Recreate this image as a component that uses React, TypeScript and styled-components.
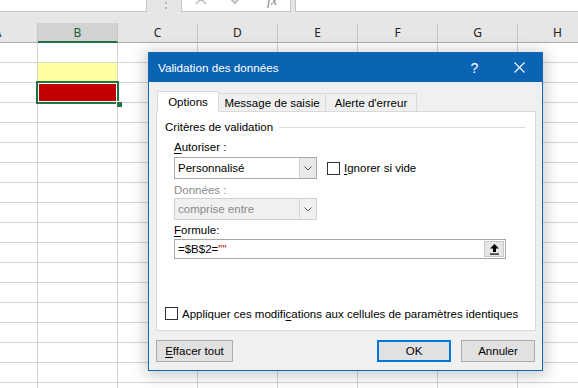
import React from "react";
import styled, { createGlobalStyle, css } from "styled-components";

const GlobalStyle = createGlobalStyle`
  html, body { margin: 0; padding: 0; overflow: hidden; background: #fff; }
  body { font-family: "Liberation Sans", Arial, sans-serif; font-size: 11.5px; color: #000; }
`;

const Screen = styled.div`
  position: relative;
  width: 578px;
  height: 388px;
  overflow: hidden;
  background: #fff;
`;

/* ---------- formula bar strip ---------- */
const TopBar = styled.div`
  height: 23px;
  background: #e6e6e6;
  display: flex;
  align-items: flex-start;
`;
const NameBox = styled.div`
  width: 147px;
  height: 12px;
  background: #fff;
  border-right: 1px solid #c6c6c6;
  border-bottom: 1px solid #c6c6c6;
  box-sizing: border-box;
  flex-shrink: 0;
`;
const Grip = styled.div`
  width: 34px;
  height: 12px;
  display: flex;
  justify-content: center;
  overflow: hidden;
  color: #9a9a9a;
  font-size: 12px;
  line-height: 6px;
  padding-left: 4px;
  box-sizing: border-box;
  flex-shrink: 0;
`;
const FxBox = styled.div`
  width: 110px;
  height: 12px;
  background: #fff;
  border: 1px solid #c6c6c6;
  border-top: none;
  box-sizing: border-box;
  display: flex;
  align-items: flex-start;
  overflow: hidden;
  flex-shrink: 0;
`;
const FxIcon = styled.div<{ $left: number }>`
  margin-left: ${(p) => p.$left}px;
  margin-top: -7px;
  display: flex;
`;
const FxText = styled.span`
  font-family: "Liberation Serif", serif;
  font-style: italic;
  font-size: 14px;
  line-height: 14px;
  color: #888;
  margin-top: -6px;
  margin-left: 24px;
`;
const FormulaBox = styled.div`
  flex: 1;
  margin-left: 4px;
  height: 12px;
  background: #fff;
  border: 1px solid #c6c6c6;
  border-top: none;
  border-right: none;
  box-sizing: border-box;
`;

/* ---------- sheet ---------- */
const Grid = styled.div`
  display: grid;
  grid-template-columns: repeat(8, 80px);
  margin-left: -42px;
`;
const ColHeader = styled.div<{ $selected?: boolean }>`
  height: 20px;
  box-sizing: border-box;
  background: ${(p) => (p.$selected ? "#d2d2d2" : "#e6e6e6")};
  border-right: 1px solid #c6c6c6;
  border-bottom: ${(p) => (p.$selected ? "2px solid #217346" : "1px solid #ababab")};
  display: flex;
  align-items: center;
  justify-content: center;
  font-family: "Noto Sans", sans-serif;
  font-size: 12px;
  padding-top: ${(p) => (p.$selected ? "1px" : "0")};
  color: ${(p) => (p.$selected ? "#1d5e3b" : "#222")};
`;
const Cell = styled.div<{ $fill?: string }>`
  position: relative;
  height: 20px;
  box-sizing: border-box;
  border-right: 1px solid #d4d4d4;
  border-bottom: 1px solid #d4d4d4;
  background: ${(p) => p.$fill || "#fff"};
`;
const Selection = styled.div`
  position: absolute;
  left: -2px;
  top: -2px;
  right: -2px;
  bottom: -2px;
  border: 2px solid #217346;
  box-shadow: inset 0 0 0 1px #fff;
  pointer-events: none;
  z-index: 2;
`;
const FillHandle = styled.div`
  position: absolute;
  right: -5px;
  bottom: -5px;
  width: 5px;
  height: 5px;
  background: #217346;
  border: 1px solid #fff;
  border-right: none;
  border-bottom: none;
`;

/* ---------- dialog ---------- */
const Dialog = styled.div`
  position: absolute;
  left: 148px;
  top: 52px;
  width: 395px;
  height: 319px;
  box-sizing: border-box;
  border: 1px solid #1467b8;
  background: #f0f0f0;
  box-shadow: 0 2px 14px 3px rgba(0, 0, 0, 0.2);
  display: flex;
  flex-direction: column;
  z-index: 5;
`;
const TitleBar = styled.div`
  height: 29px;
  background: #0b63b4;
  color: #fff;
  display: flex;
  align-items: center;
  padding-left: 9px;
  font-size: 11.7px;
  flex-shrink: 0;
`;
const Title = styled.span`
  flex: 1;
`;
const TitleButton = styled.div`
  width: 45px;
  display: flex;
  align-items: center;
  justify-content: center;
  font-size: 14px;
`;
const Body = styled.div`
  flex: 1;
  padding: 9px 6px 0 7px;
  display: flex;
  flex-direction: column;
`;
const TabRow = styled.div`
  display: flex;
  align-items: flex-end;
  height: 21px;
  margin-left: 1px;
  margin-bottom: -1px;
  position: relative;
  z-index: 1;
`;
const Tab = styled.div<{ $active?: boolean; $w: number }>`
  width: ${(p) => p.$w}px;
  box-sizing: border-box;
  display: flex;
  align-items: center;
  justify-content: center;
  border: 1px solid #d9d9d9;
  margin-left: -1px;
  ${(p) =>
    p.$active
      ? css`
          height: 21px;
          background: #fff;
          border-bottom-color: #fff;
          z-index: 1;
        `
      : css`
          height: 19px;
          background: #f0f0f0;
        `}
  &:first-child { margin-left: 0; }
`;
const Panel = styled.div`
  height: 220px;
  box-sizing: border-box;
  border: 1px solid #d9d9d9;
  background: #fff;
  display: flex;
  flex-direction: column;
  padding: 7px 10px 8px 8px;
`;
const GroupHeader = styled.div`
  display: flex;
  align-items: center;
  height: 16px;
`;
const GroupLine = styled.div`
  flex: 1;
  height: 1px;
  background: #dcdcdc;
  margin-left: 6px;
`;
const Fields = styled.div`
  display: flex;
  flex-direction: column;
  padding-left: 9px;
  margin-top: 4px;
`;
const Label = styled.div<{ $disabled?: boolean; $mb?: number }>`
  height: 16px;
  line-height: 16px;
  color: ${(p) => (p.$disabled ? "#8a8a8a" : "#000")};
  margin-bottom: ${(p) => p.$mb ?? 0}px;
`;
const Gap = styled.div<{ $h?: number; $w?: number }>`
  height: ${(p) => p.$h ?? 0}px;
  width: ${(p) => p.$w ?? 0}px;
  flex-shrink: 0;
`;
const Row = styled.div`
  display: flex;
  align-items: center;
`;
const Select = styled.div<{ $disabled?: boolean }>`
  width: 143px;
  height: 22px;
  box-sizing: border-box;
  border: 1px solid ${(p) => (p.$disabled ? "#cfcfcf" : "#a8a8a8")};
  background: ${(p) => (p.$disabled ? "#f0f0f0" : "#fff")};
  color: ${(p) => (p.$disabled ? "#8a8a8a" : "#000")};
  display: flex;
  align-items: stretch;
`;
const SelectText = styled.div`
  flex: 1;
  padding-left: 3px;
  display: flex;
  align-items: center;
`;
const SelectArrow = styled.div<{ $disabled?: boolean }>`
  width: 16px;
  border-left: 1px solid ${(p) => (p.$disabled ? "#d6d6d6" : "#cfcfcf")};
  background: ${(p) => (p.$disabled ? "#f0f0f0" : "#e9e9e9")};
  display: flex;
  align-items: center;
  justify-content: center;
`;
const CheckRow = styled.label`
  display: flex;
  align-items: center;
  gap: 4px;
  height: 17px;
  white-space: nowrap;
`;
const Box = styled.span`
  width: 13px;
  height: 13px;
  box-sizing: border-box;
  border: 1px solid #333;
  background: #fff;
  flex-shrink: 0;
`;
const Input = styled.div`
  width: 332px;
  height: 20px;
  box-sizing: border-box;
  border: 1px solid #a8a8a8;
  background: #fff;
  display: flex;
  align-items: stretch;
`;
const InputText = styled.div`
  flex: 1;
  padding-left: 3px;
  display: flex;
  align-items: center;
`;
const Quote = styled.span`
  color: #d00000;
`;
const RefButton = styled.div`
  width: 20px;
  margin: 1px;
  background: #e6e6e6;
  border: 1px solid #c8c8c8;
  box-sizing: border-box;
  display: flex;
  align-items: center;
  justify-content: center;
`;
const Spacer = styled.div`
  flex: 1;
`;
const ButtonRow = styled.div`
  display: flex;
  align-items: center;
  margin-top: 9px;
  margin-right: 1px;
  gap: 10px;
`;
const Button = styled.div<{ $default?: boolean; $w: number }>`
  width: ${(p) => p.$w}px;
  height: 22px;
  box-sizing: border-box;
  border: ${(p) => (p.$default ? "2px solid #0078d7" : "1px solid #adadad")};
  background: #e1e1e1;
  display: flex;
  align-items: center;
  justify-content: center;
`;
const U = styled.span`
  text-decoration: underline;
  text-underline-offset: 2px;
`;

const Chevron = ({ color }: { color: string }) => (
  <svg width="8" height="5" viewBox="0 0 8 5">
    <path d="M0.5 0.5 L4 4 L7.5 0.5" fill="none" stroke={color} strokeWidth="1" />
  </svg>
);

const cols = ["A", "B", "C", "D", "E", "F", "G", "H"];
const ROWS = 18;

export default function App() {
  return (
    <>
      <GlobalStyle />
      <Screen>
        <TopBar>
          <NameBox />
          <Grip>⋮</Grip>
          <FxBox>
            <FxIcon $left={13}>
              <svg width="12" height="12" viewBox="0 0 12 12">
                <path d="M1 1 L11 11 M11 1 L1 11" stroke="#bdbdbd" strokeWidth="1.6" />
              </svg>
            </FxIcon>
            <FxIcon $left={23}>
              <svg width="13" height="12" viewBox="0 0 13 12">
                <path d="M1 6 L5 10 L12 2" fill="none" stroke="#bdbdbd" strokeWidth="2" />
              </svg>
            </FxIcon>
            <FxText>fx</FxText>
          </FxBox>
          <FormulaBox />
        </TopBar>
        <Grid>
          {cols.map((c) => (
            <ColHeader key={c} $selected={c === "B"}>
              {c}
            </ColHeader>
          ))}
          {Array.from({ length: ROWS }).map((_, r) =>
            cols.map((c) => {
              const isB = c === "B";
              const fill = isB && r === 1 ? "#ffff9f" : isB && r === 2 ? "#c00000" : undefined;
              return (
                <Cell key={`${c}${r}`} $fill={fill}>
                  {isB && r === 2 && (
                    <Selection>
                      <FillHandle />
                    </Selection>
                  )}
                </Cell>
              );
            })
          )}
        </Grid>

        <Dialog>
          <TitleBar>
            <Title>Validation des données</Title>
            <TitleButton>?</TitleButton>
            <TitleButton>
              <svg width="11" height="11" viewBox="0 0 11 11">
                <path d="M0.5 0.5 L10.5 10.5 M10.5 0.5 L0.5 10.5" stroke="#fff" strokeWidth="1.1" />
              </svg>
            </TitleButton>
          </TitleBar>
          <Body>
            <TabRow>
              <Tab $active $w={62}>Options</Tab>
              <Tab $w={108}>Message de saisie</Tab>
              <Tab $w={92}>Alerte d'erreur</Tab>
            </TabRow>
            <Panel>
              <GroupHeader>
                <span>Critères de validation</span>
                <GroupLine />
              </GroupHeader>
              <Fields>
                <Label $mb={2}>
                  <U>A</U>utoriser :
                </Label>
                <Row>
                  <Select>
                    <SelectText>Personnalisé</SelectText>
                    <SelectArrow>
                      <Chevron color="#555" />
                    </SelectArrow>
                  </Select>
                  <Gap $w={10} />
                  <CheckRow>
                    <Box />
                    <span>
                      <U>I</U>gnorer si vide
                    </span>
                  </CheckRow>
                </Row>
                <Gap $h={3} />
                <Label $disabled>Données :</Label>
                <Select $disabled>
                  <SelectText>comprise entre</SelectText>
                  <SelectArrow $disabled>
                    <Chevron color="#555" />
                  </SelectArrow>
                </Select>
                <Gap $h={2} />
                <Label $mb={1}>
                  <U>F</U>ormule:
                </Label>
                <Input>
                  <InputText>
                    =$B$2=<Quote>""</Quote>
                  </InputText>
                  <RefButton>
                    <svg width="11" height="12" viewBox="0 0 11 12">
                      <path d="M5.5 1 L10 5.5 L7 5.5 L7 9 L4 9 L4 5.5 L1 5.5 Z" fill="#000" />
                      <rect x="1" y="10.5" width="9" height="1.2" fill="#000" />
                    </svg>
                  </RefButton>
                </Input>
              </Fields>
              <Spacer />
              <CheckRow>
                <Box />
                <span>
                  Appliquer ces modifi<U>c</U>ations aux cellules de paramètres identiques
                </span>
              </CheckRow>
            </Panel>
            <ButtonRow>
              <Button $w={77}>
                <span>
                  <U>E</U>ffacer tout
                </span>
              </Button>
              <Spacer />
              <Button $default $w={74}>OK</Button>
              <Button $w={74}>Annuler</Button>
            </ButtonRow>
          </Body>
        </Dialog>
      </Screen>
    </>
  );
}
